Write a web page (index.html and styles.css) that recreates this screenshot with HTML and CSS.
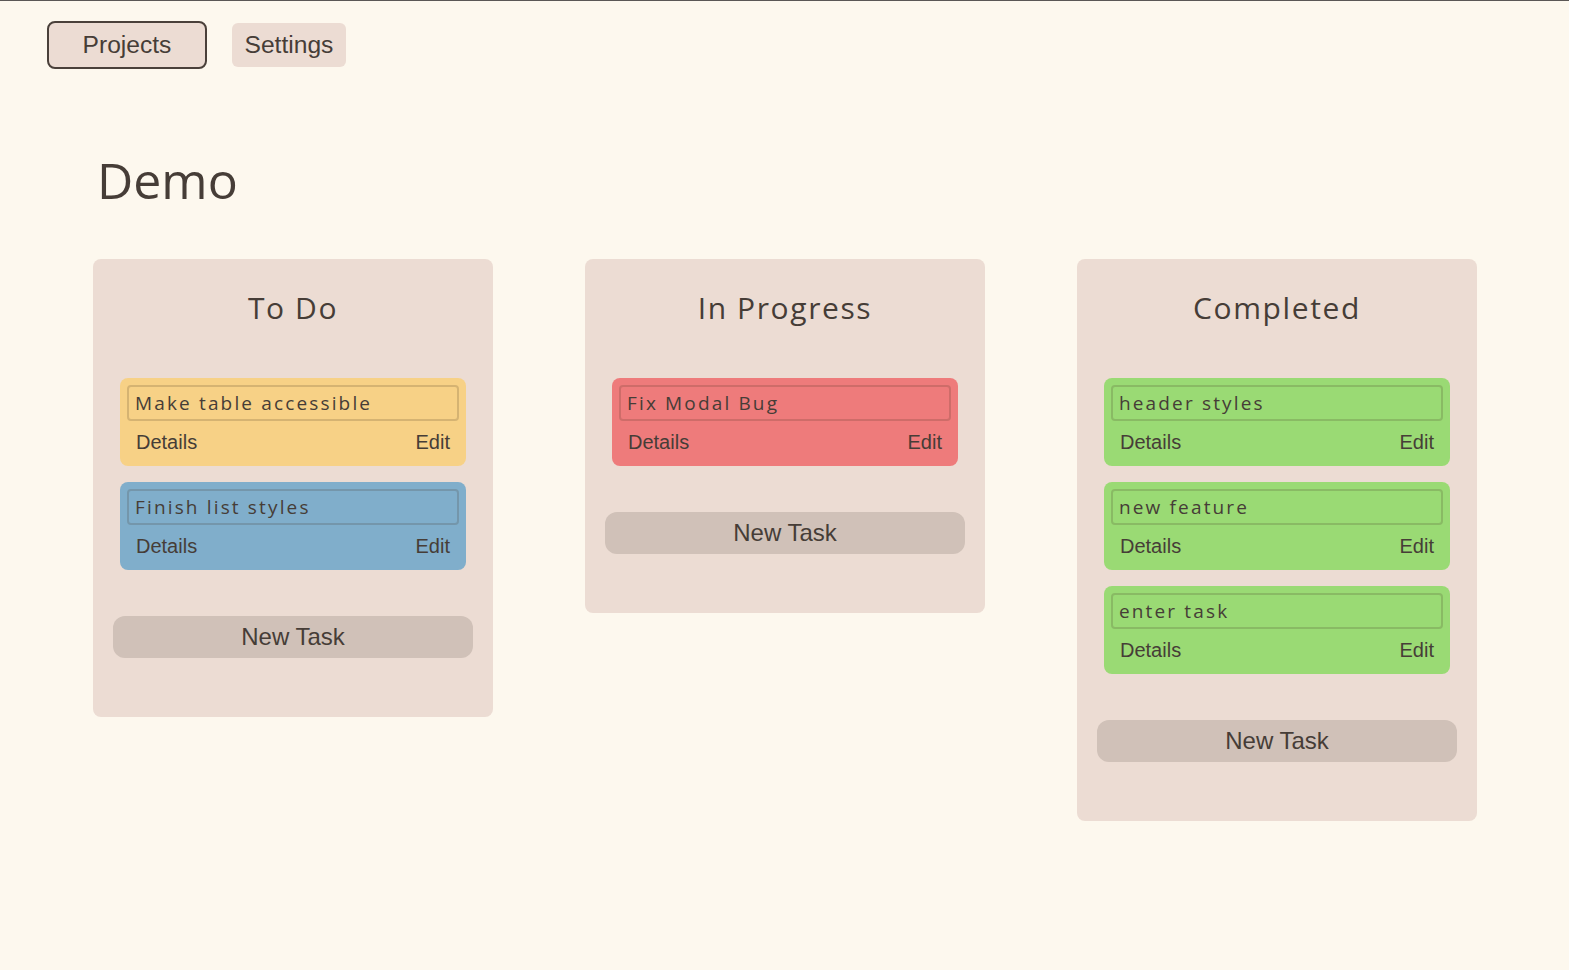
FILE: index.html
```html
<!DOCTYPE html>
<html lang="en">
<head>
<meta charset="utf-8">
<title>Demo</title>
<link rel="stylesheet" href="styles.css">
</head>
<body>
<nav class="nav">
  <button class="nav-btn nav-btn-active">Projects</button>
  <button class="nav-btn">Settings</button>
</nav>
<main class="main">
  <h1 class="title">Demo</h1>
  <div class="board">
    <section class="column">
      <h2 class="column-title">To Do</h2>
      <div class="tasks">
        <div class="task task-yellow">
          <input class="task-input" value="Make table accessible">
          <div class="task-links"><span>Details</span><span>Edit</span></div>
        </div>
        <div class="task task-blue">
          <input class="task-input" value="Finish list styles">
          <div class="task-links"><span>Details</span><span>Edit</span></div>
        </div>
      </div>
      <button class="new-task">New Task</button>
    </section>
    <section class="column">
      <h2 class="column-title">In Progress</h2>
      <div class="tasks">
        <div class="task task-red">
          <input class="task-input" value="Fix Modal Bug">
          <div class="task-links"><span>Details</span><span>Edit</span></div>
        </div>
      </div>
      <button class="new-task">New Task</button>
    </section>
    <section class="column">
      <h2 class="column-title">Completed</h2>
      <div class="tasks">
        <div class="task task-green">
          <input class="task-input" value="header styles">
          <div class="task-links"><span>Details</span><span>Edit</span></div>
        </div>
        <div class="task task-green">
          <input class="task-input" value="new feature">
          <div class="task-links"><span>Details</span><span>Edit</span></div>
        </div>
        <div class="task task-green">
          <input class="task-input" value="enter task">
          <div class="task-links"><span>Details</span><span>Edit</span></div>
        </div>
      </div>
      <button class="new-task">New Task</button>
    </section>
  </div>
</main>
</body>
</html>
```

FILE: styles.css
```css
html, body {
  margin: 0;
  padding: 0;
}
body {
  background: #fdf8ee;
  color: #463d37;
  font-family: "Liberation Sans", Arial, sans-serif;
  border-top: 1px solid #5b5755;
  min-height: 969px;
  box-sizing: border-box;
}
.nav {
  display: flex;
  align-items: center;
  gap: 25px;
  padding: 20px 0 0 47px;
  height: 48px;
}
.nav-btn {
  font-family: "Liberation Sans", Arial, sans-serif;
  font-size: 24.6px;
  color: #463d37;
  background: #ecdcd3;
  border: none;
  border-radius: 6px;
  height: 44px;
  padding: 0 12.5px;
  line-height: 44px;
}
.nav-btn-active {
  border: 2px solid #4a403a;
  border-radius: 8px;
  height: 48px;
  width: 160px;
  padding: 0;
  line-height: 44px;
}
.main {
  padding: 0 0 0 93px;
}
.title {
  font-family: "Open Sans", sans-serif;
  font-weight: 400;
  font-size: 50px;
  letter-spacing: 0;
  line-height: 60px;
  margin: 81px 0 0 4px;
  height: 60px;
}
.board {
  display: flex;
  align-items: flex-start;
  gap: 92px;
  margin-top: 49px;
}
.column {
  width: 400px;
  box-sizing: border-box;
  background: #ecdcd3;
  border-radius: 8px;
  padding: 0 27px 59px;
  display: flex;
  flex-direction: column;
}
.column-title {
  font-family: "Open Sans", sans-serif;
  font-weight: 400;
  font-size: 30px;
  letter-spacing: 1.6px;
  line-height: 38px;
  text-align: center;
  margin: 30px 0 51px;
}
.tasks {
  display: flex;
  flex-direction: column;
  gap: 16px;
}
.task {
  border-radius: 8px;
  padding: 7px 7px 12px;
}
.task-yellow { background: #f7d186; }
.task-blue { background: #80aecb; }
.task-red { background: #ee7b7b; }
.task-green { background: #9ada74; }
.task-input {
  display: block;
  width: 100%;
  box-sizing: border-box;
  height: 36px;
  border: 2px solid rgba(60, 45, 30, 0.18);
  border-radius: 4px;
  background: transparent;
  font-family: "Open Sans", sans-serif;
  font-size: 19px;
  letter-spacing: 2.15px;
  color: #463d37;
  padding: 0 6px;
  outline: none;
}
.task-links {
  display: flex;
  justify-content: space-between;
  font-size: 20px;
  line-height: 23px;
  margin-top: 10px;
  padding: 0 9px;
}
.new-task {
  margin: 46px -7px 0;
  height: 42px;
  border: none;
  border-radius: 12px;
  background: #d0c1b8;
  font-family: "Liberation Sans", Arial, sans-serif;
  font-size: 24px;
  color: #463d37;
}
```
